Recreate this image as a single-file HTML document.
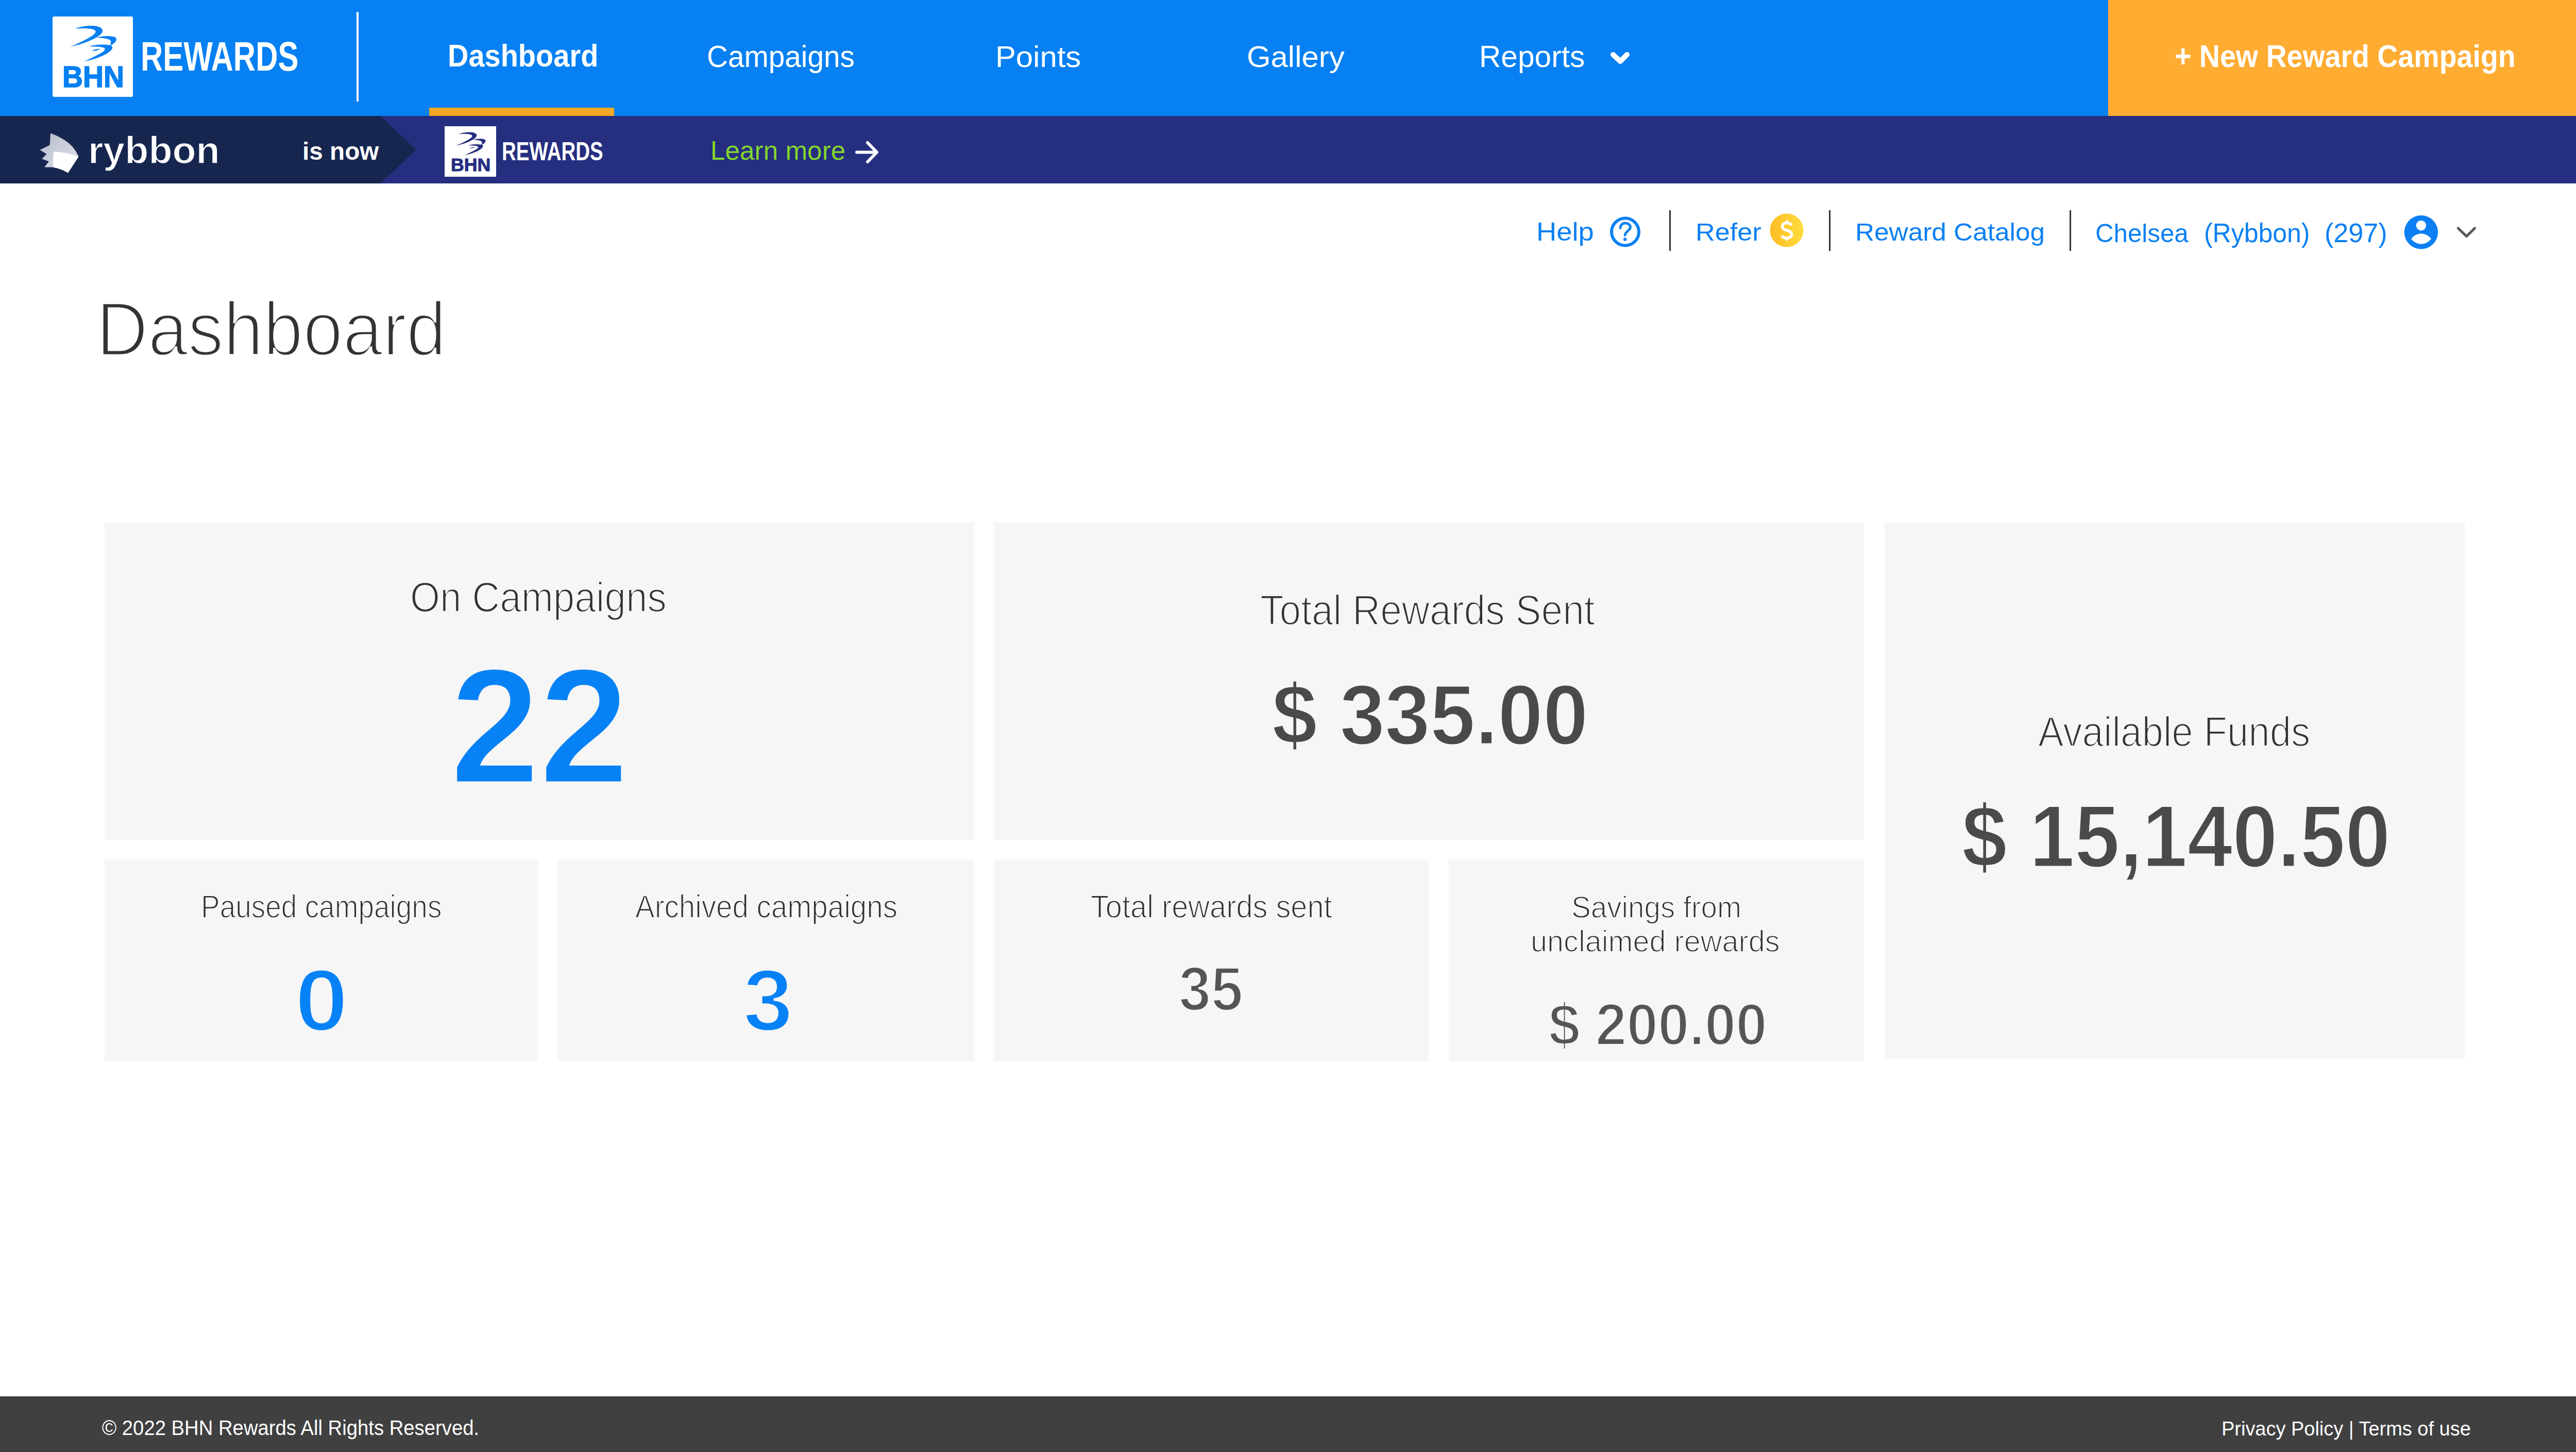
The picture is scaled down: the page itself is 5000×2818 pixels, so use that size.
<!DOCTYPE html>
<html><head><meta charset="utf-8"><title>BHN Rewards Dashboard</title>
<style>
html,body{margin:0;padding:0;width:5000px;height:2818px;overflow:hidden;background:#ffffff;position:relative;font-family:"Liberation Sans",sans-serif}
.r{position:absolute}
.t{position:absolute;white-space:nowrap;transform-origin:0 0;font-family:"Liberation Sans",sans-serif}
svg.ov{position:absolute;left:0;top:0}
</style></head><body>
<!-- top nav -->
<div class="r" style="left:0;top:0;width:5000px;height:225px;background:#0680f2"></div>
<div class="r" style="left:4092px;top:0;width:908px;height:225px;background:#ffac33"></div>
<div class="r" style="left:102px;top:32px;width:156px;height:156px;background:#fff;border-radius:3px"></div>
<div class="r" style="left:692px;top:23px;width:4px;height:174px;background:#fff"></div>
<div class="r" style="left:833px;top:209px;width:359px;height:16px;background:#f5a623"></div>
<!-- banner -->
<div class="r" style="left:0;top:225px;width:5000px;height:131px;background:#262e80"></div>
<div class="r" style="left:863px;top:245px;width:100px;height:98px;background:#fff"></div>
<!-- cards -->
<div class="r" style="left:203px;top:1014px;width:1688px;height:616px;background:#f6f6f6"></div>
<div class="r" style="left:1929px;top:1014px;width:1689px;height:616px;background:#f6f6f6"></div>
<div class="r" style="left:3658px;top:1014px;width:1126px;height:1040px;background:#f6f6f6"></div>
<div class="r" style="left:203px;top:1668px;width:841px;height:392px;background:#f6f6f6"></div>
<div class="r" style="left:1083px;top:1668px;width:808px;height:392px;background:#f6f6f6"></div>
<div class="r" style="left:1929px;top:1668px;width:844px;height:392px;background:#f6f6f6"></div>
<div class="r" style="left:2812px;top:1668px;width:806px;height:392px;background:#f6f6f6"></div>
<!-- footer -->
<div class="r" style="left:0;top:2710px;width:5000px;height:108px;background:#404040"></div>
<!-- dividers -->
<div class="r" style="left:3240px;top:408px;width:3px;height:79px;background:#333"></div>
<div class="r" style="left:3550px;top:408px;width:3px;height:79px;background:#333"></div>
<div class="r" style="left:4017px;top:408px;width:3px;height:79px;background:#333"></div>

<svg class="ov" width="5000" height="2818" viewBox="0 0 5000 2818">
 <defs>
  
  <linearGradient id="coin" x1="0" y1="0" x2="1" y2="0">
   <stop offset="0" stop-color="#ffbd24"/><stop offset="1" stop-color="#ffdc3e"/>
  </linearGradient>
  <linearGradient id="ryb" x1="0" y1="0" x2="0.8" y2="1">
   <stop offset="0" stop-color="#b4bacb"/><stop offset="1" stop-color="#dfe2ea"/>
  </linearGradient>
 </defs>
 <!-- big logo swoosh -->
 <g transform="translate(102,32)" fill="#0680f2">
   <path d="M43.8,24.1 C52,19 76,16 88,19.5 C98,22 100,29 93,35 C84,43 62,53 34.4,58.7 C55,50 76,40 82,33 C86,28 82,25 74,24 C64,22.5 52,23 43.8,24.1 Z"/>
   <path d="M85.4,41.1 C95,37.5 112,37 120,39.5 C126,42 125,48 118,53 L111,57.5 C113,53 115,48 111,45.5 C106,42.5 95,41.5 85.4,41.1 Z"/>
   <path d="M71.3,58.1 C80,55 98,53.5 110,55.5 C118,57 118,62 112,67 C104,74 88,82 60.8,87.4 C75,81 92,73 99,67.5 C104,63 102,60.5 95,59.5 C88,58.5 80,58.3 71.3,58.1 Z"/>
   <path d="M76,66.5 C82,63.5 89,62.5 93.5,63.3 C88,65.5 81,67.5 76,66.5 Z"/>
  </g>
 <!-- small logo swoosh -->
 <g transform="translate(863,245) scale(0.641)" fill="#262e80">
   <path d="M43.8,24.1 C52,19 76,16 88,19.5 C98,22 100,29 93,35 C84,43 62,53 34.4,58.7 C55,50 76,40 82,33 C86,28 82,25 74,24 C64,22.5 52,23 43.8,24.1 Z"/>
   <path d="M85.4,41.1 C95,37.5 112,37 120,39.5 C126,42 125,48 118,53 L111,57.5 C113,53 115,48 111,45.5 C106,42.5 95,41.5 85.4,41.1 Z"/>
   <path d="M71.3,58.1 C80,55 98,53.5 110,55.5 C118,57 118,62 112,67 C104,74 88,82 60.8,87.4 C75,81 92,73 99,67.5 C104,63 102,60.5 95,59.5 C88,58.5 80,58.3 71.3,58.1 Z"/>
   <path d="M76,66.5 C82,63.5 89,62.5 93.5,63.3 C88,65.5 81,67.5 76,66.5 Z"/>
  </g>
 <!-- banner dark arrow -->
 <polygon points="0,225 738,225 808,290.5 738,356 0,356" fill="#16264f"/>
 <!-- rybbon icon -->
 <path d="M97.9,258.7 C112,263 130,273 140,284 C146,291 150,298 152.5,303.9 L132,335.6 C124,331 112,325.5 100,324.5 L86.1,324.4 L94.8,313.2 L81.2,308.3 L90.5,299 L77.4,290.9 L96.7,281.6 Z" fill="url(#ryb)"/>
 <path d="M104.5,294.5 C120,295 138,298.5 152.5,303.9 L132,335.6 C122,329 112,326 104,325 C103,316 103,304 104.5,294.5 Z" fill="#ffffff"/>
 <!-- learn more arrow -->
 <path d="M1663,295.5 H1701 M1684,277 L1702,295.5 L1684,314" stroke="#fff" stroke-width="6" fill="none" stroke-linecap="round" stroke-linejoin="round"/>
 <!-- reports chevron -->
 <path d="M3131,106 L3145,119 L3158,106" stroke="#fff" stroke-width="10" fill="none" stroke-linecap="round" stroke-linejoin="round"/>
 <!-- help icon -->
 <circle cx="3154.5" cy="450" r="26.5" stroke="#0c80f2" stroke-width="6" fill="none"/>
 <path d="M3145,442.5 C3145.5,436 3149.5,433 3155,433 C3160.5,433 3164.5,436.5 3164.5,441 C3164.5,447 3155,449 3154,456.5" stroke="#0c80f2" stroke-width="4.8" fill="none" stroke-linecap="round"/>
 <circle cx="3154.2" cy="464.5" r="3.2" fill="#0c80f2"/>
 <!-- coin -->
 <circle cx="3468" cy="447" r="32.5" fill="url(#coin)"/>
 <path d="M3477.5,437.5 C3476,434.5 3472.5,432.5 3468,432.5 C3462.5,432.5 3459.5,435.5 3459.5,439.5 C3459.5,444 3463,446 3468,447 C3474,448.2 3477.5,450.5 3477.5,455 C3477.5,459.5 3473.5,462 3468,462 C3463.5,462 3460,460 3458.5,457.5" stroke="#fff" stroke-width="5.6" fill="none"/>
 <polygon points="3468,425.5 3472,432.8 3464,432.8" fill="#fff"/><polygon points="3468,469 3472,461.7 3464,461.7" fill="#fff"/>
 <!-- user icon -->
 <circle cx="4699.4" cy="450.7" r="32.7" fill="#0c80f2"/>
 <circle cx="4699.4" cy="437.7" r="9.7" fill="#fff"/>
 <path d="M4680,463.5 C4686,456 4693,453.5 4699.5,453.5 C4706,453.5 4713,456 4719,463.5 C4713,471 4706,473.5 4699.5,473.5 C4693,473.5 4686,471 4680,463.5 Z" fill="#fff"/>
 <path d="M4771.2,443 L4787.5,458.6 L4803.4,443" stroke="#5a5a5a" stroke-width="5" fill="none" stroke-linecap="round" stroke-linejoin="round"/>
</svg>
<span class="t" style="left:120.8px;top:121px;font-size:57px;line-height:57px;font-weight:700;color:#0680f2;transform:scaleX(0.9706);-webkit-text-stroke:1.6px #0680f2;">BHN</span>
<span class="t" style="left:273.0px;top:70px;font-size:80px;line-height:80px;font-weight:700;color:#ffffff;transform:scaleX(0.7494);">REWARDS</span>
<span class="t" style="left:869.3px;top:77px;font-size:62px;line-height:62px;font-weight:700;color:#ffffff;transform:scaleX(0.9028);">Dashboard</span>
<span class="t" style="left:1372.1px;top:81px;font-size:59px;line-height:59px;font-weight:400;color:#ffffff;transform:scaleX(0.9615);">Campaigns</span>
<span class="t" style="left:1932.1px;top:82px;font-size:57px;line-height:57px;font-weight:400;color:#ffffff;transform:scaleX(1.0488);">Points</span>
<span class="t" style="left:2420.0px;top:81px;font-size:58px;line-height:58px;font-weight:400;color:#ffffff;transform:scaleX(1.0321);">Gallery</span>
<span class="t" style="left:2870.7px;top:80px;font-size:60px;line-height:60px;font-weight:400;color:#ffffff;transform:scaleX(0.9778);">Reports</span>
<span class="t" style="left:4220.7px;top:78px;font-size:62px;line-height:62px;font-weight:700;color:#ffffff;transform:scaleX(0.8954);">+ New Reward Campaign</span>
<span class="t" style="left:170.8px;top:254px;font-size:75px;line-height:75px;font-weight:700;color:#ffffff;transform:scaleX(1.0057);-webkit-text-stroke:1.5px #16264f;">rybbon</span>
<span class="t" style="left:586.6px;top:270px;font-size:48px;line-height:48px;font-weight:700;color:#ffffff;transform:scaleX(0.9932);">is now</span>
<span class="t" style="left:875.2px;top:302px;font-size:35px;line-height:35px;font-weight:700;color:#262e80;transform:scaleX(1.0197);-webkit-text-stroke:1.0px #262e80;">BHN</span>
<span class="t" style="left:973.5px;top:269px;font-size:50px;line-height:50px;font-weight:700;color:#ffffff;transform:scaleX(0.7699);">REWARDS</span>
<span class="t" style="left:1378.8px;top:266px;font-size:52px;line-height:52px;font-weight:400;color:#82d62c;transform:scaleX(0.9861);">Learn more</span>
<span class="t" style="left:2981.5px;top:425px;font-size:50px;line-height:50px;font-weight:400;color:#0c80f2;transform:scaleX(1.0870);">Help</span>
<span class="t" style="left:3291.1px;top:426px;font-size:49px;line-height:49px;font-weight:400;color:#0c80f2;transform:scaleX(1.0661);">Refer</span>
<span class="t" style="left:3601.3px;top:426px;font-size:49px;line-height:49px;font-weight:400;color:#0c80f2;transform:scaleX(1.0474);">Reward Catalog</span>
<span class="t" style="left:4067.3px;top:428px;font-size:50px;line-height:50px;font-weight:400;color:#0c80f2;transform:scaleX(0.9851);">Chelsea</span>
<span class="t" style="left:4277.5px;top:426px;font-size:52px;line-height:52px;font-weight:400;color:#0c80f2;transform:scaleX(0.9600);">(Rybbon)</span>
<span class="t" style="left:4511.5px;top:426px;font-size:52px;line-height:52px;font-weight:400;color:#0c80f2;transform:scaleX(1.0026);">(297)</span>
<span class="t" style="left:187.2px;top:564px;font-size:149px;line-height:149px;font-weight:400;color:#333333;transform:scaleX(0.9316);-webkit-text-stroke:4.8px #ffffff;">Dashboard</span>
<span class="t" style="left:796.3px;top:1118px;font-size:82px;line-height:82px;font-weight:400;color:#333333;transform:scaleX(0.9100);-webkit-text-stroke:2.4px #f6f6f6;">On Campaigns</span>
<span class="t" style="left:873.7px;top:1250px;font-size:318px;line-height:318px;font-weight:700;color:#0782f6;transform:scaleX(0.9788);-webkit-text-stroke:5px #f6f6f6;">22</span>
<span class="t" style="left:2446.1px;top:1144px;font-size:81px;line-height:81px;font-weight:400;color:#333333;transform:scaleX(0.9250);-webkit-text-stroke:2.4px #f6f6f6;">Total Rewards Sent</span>
<span class="t" style="left:2469.4px;top:1304px;font-size:166px;line-height:166px;font-weight:700;color:#4a4a4a;transform:scaleX(0.9495);-webkit-text-stroke:3px #f6f6f6;">$ 335.00</span>
<span class="t" style="left:3955.6px;top:1380px;font-size:81px;line-height:81px;font-weight:400;color:#333333;transform:scaleX(0.9189);-webkit-text-stroke:2.4px #f6f6f6;">Available Funds</span>
<span class="t" style="left:3808.4px;top:1538px;font-size:170px;line-height:170px;font-weight:700;color:#4a4a4a;transform:scaleX(0.9260);-webkit-text-stroke:3px #f6f6f6;">$ 15,140.50</span>
<span class="t" style="left:389.6px;top:1728px;font-size:63px;line-height:63px;font-weight:400;color:#333333;transform:scaleX(0.8722);-webkit-text-stroke:1.8px #f6f6f6;">Paused campaigns</span>
<span class="t" style="left:572.1px;top:1856px;font-size:170px;line-height:170px;font-weight:700;color:#0782f6;transform:scaleX(1.1001);-webkit-text-stroke:5px #f6f6f6;">0</span>
<span class="t" style="left:1233.0px;top:1728px;font-size:63px;line-height:63px;font-weight:400;color:#333333;transform:scaleX(0.8971);-webkit-text-stroke:1.8px #f6f6f6;">Archived campaigns</span>
<span class="t" style="left:1441.5px;top:1856px;font-size:170px;line-height:170px;font-weight:700;color:#0782f6;transform:scaleX(1.0296);-webkit-text-stroke:5px #f6f6f6;">3</span>
<span class="t" style="left:2116.8px;top:1728px;font-size:63px;line-height:63px;font-weight:400;color:#333333;transform:scaleX(0.9166);-webkit-text-stroke:1.8px #f6f6f6;">Total rewards sent</span>
<span class="t" style="left:2288.4px;top:1859px;font-size:120px;line-height:120px;font-weight:700;color:#555555;transform:scaleX(0.9348);-webkit-text-stroke:4px #f6f6f6;">35</span>
<span class="t" style="left:3049.6px;top:1731px;font-size:60px;line-height:60px;font-weight:400;color:#333333;transform:scaleX(0.9429);-webkit-text-stroke:1.8px #f6f6f6;">Savings from</span>
<span class="t" style="left:2971.4px;top:1798px;font-size:59px;line-height:59px;font-weight:400;color:#333333;transform:scaleX(0.9765);-webkit-text-stroke:1.8px #f6f6f6;">unclaimed rewards</span>
<span class="t" style="left:3005.6px;top:1931px;font-size:115px;line-height:115px;font-weight:700;color:#555555;transform:scaleX(0.9470);-webkit-text-stroke:4px #f6f6f6;">$ 200.00</span>
<span class="t" style="left:198.4px;top:2751px;font-size:41px;line-height:41px;font-weight:400;color:#ffffff;transform:scaleX(0.9332);">© 2022 BHN Rewards All Rights Reserved.</span>
<span class="t" style="left:4311.9px;top:2753px;font-size:39px;line-height:39px;font-weight:400;color:#ffffff;transform:scaleX(0.9732);">Privacy Policy | Terms of use</span>
</body></html>
